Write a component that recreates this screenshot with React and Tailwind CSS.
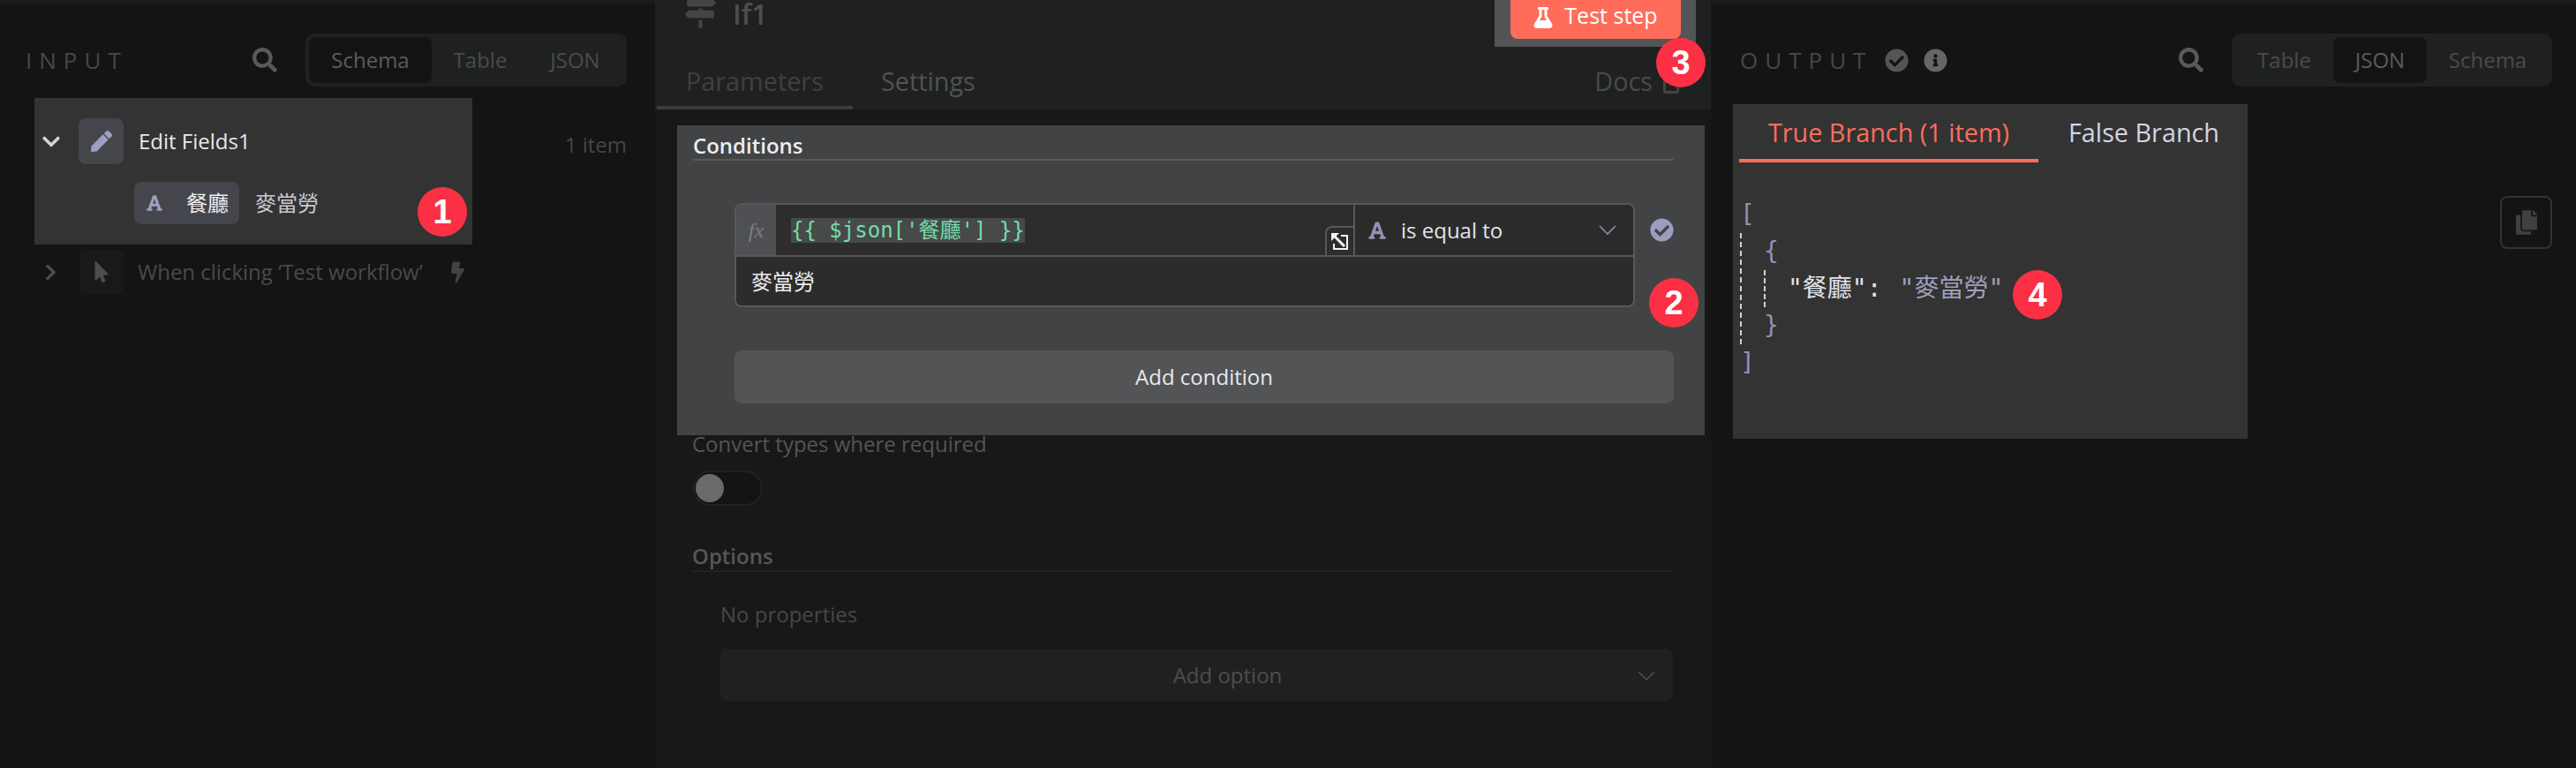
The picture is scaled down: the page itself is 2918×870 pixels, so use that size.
import React from "react";
import { FaSearch, FaPen, FaChevronDown, FaChevronRight, FaMousePointer, FaBolt, FaFont, FaMapSigns, FaFlask, FaCheckCircle, FaInfoCircle, FaCopy } from "react-icons/fa";

function Badge({ n, className }) {
  return (
    <div className={"absolute z-10 flex h-[56px] w-[56px] items-center justify-center rounded-full bg-[#fb3044] text-[38px] leading-none font-bold text-white [font-family:'Liberation_Sans',sans-serif] " + className}>
      {n}
    </div>
  );
}

function Thin({ className }) {
  return (
    <svg viewBox="0 0 20 11" className={className} fill="none" stroke="currentColor" strokeWidth="1.6">
      <path d="M1 1l9 9 9-9" />
    </svg>
  );
}

function Tabs({ items, active, className }) {
  return (
    <div className={"flex h-[60px] items-center rounded-[10px] bg-[#1f2120] p-[4px] text-[24px] " + className}>
      {items.map((t) => (
        <div key={t.l} style={{ width: t.w }} className={"flex h-[52px] items-center justify-center rounded-[8px] " + (t.l === active ? "bg-[#131313] text-[#5c5c5c]" : "text-[#4a4b4b]")}>
          {t.l}
        </div>
      ))}
    </div>
  );
}

export default function App() {
  return (
    <div className="flex h-[870px] w-[2918px] overflow-hidden bg-[#141414] text-[24px] [font-family:'Open_Sans','Noto_Sans_CJK_TC',sans-serif]">
      {/* Input */}
      <div className="flex w-[742px] shrink-0 flex-col">
        <div className="h-[5px] bg-[#1b1b1b]" />
        <div className="mt-[33px] flex h-[60px] items-center pr-[32px] pl-[29px]">
          <span className="text-[26px] tracking-[8px] text-[#474747]">INPUT</span>
          <FaSearch className="mr-[32px] ml-auto h-[28px] w-[28px] text-[#5a5a5a]" />
          <Tabs className="w-[364px]" active="Schema" items={[{ l: "Schema", w: 139 }, { l: "Table", w: 110 }, { l: "JSON", w: 105 }]} />
        </div>
        <div className="mt-[13px] flex pr-[32px] pl-[39px]">
          <div className="relative h-[166px] w-[496px] bg-[#333333] pt-[23px]">
            <div className="flex items-center">
              <FaChevronDown className="ml-[9px] h-[23px] w-[20px] text-[#d4d4e0]" />
              <div className="ml-[21px] flex h-[52px] w-[51px] items-center justify-center rounded-[8px] bg-[#45464b]">
                <FaPen className="h-[24px] w-[24px] text-[#9f9fc4]" />
              </div>
              <span className="ml-[17px] text-[#e8e8ee]">Edit Fields1</span>
            </div>
            <div className="mt-[20px] ml-[113px] flex items-center">
              <div className="flex h-[48px] w-[119px] items-center rounded-[8px] bg-[#45464b] pl-[14px]">
                <FaFont className="h-[20px] w-[18px] text-[#9f9fc4]" />
                <span className="ml-[27px] text-[#eeeef2]">餐廳</span>
              </div>
              <span className="ml-[18px] text-[#c8c8d0]">麥當勞</span>
            </div>
            <Badge n="1" className="top-[101px] left-[434px]" />
          </div>
          <span className="mt-[35px] ml-auto text-[#464646]">1 item</span>
        </div>
        <div className="mt-[6px] flex h-[50px] items-center pl-[51px]">
          <FaChevronRight className="h-[23px] w-[13px] text-[#4e4e4e]" />
          <div className="ml-[26px] flex h-[50px] w-[50px] items-center justify-center rounded-[8px] bg-[#191919]">
            <FaMousePointer className="h-[24px] w-[16px] text-[#4e4e4e]" />
          </div>
          <span className="ml-[16px] text-[#4a4a4a]">When clicking ‘Test workflow’</span>
          <FaBolt className="ml-[32px] h-[25px] w-[15px] text-[#424242]" />
        </div>
      </div>

      {/* Parameters */}
      <div className="flex w-[1196px] shrink-0 flex-col">
        <div className="relative h-[124px] bg-[#1f2120]">
          <div className="flex items-start">
            <FaMapSigns className="mt-[-4px] ml-[34px] h-[36px] w-[35px] text-[#454545]" />
            <span className="ml-[19px] text-[32px] leading-[32px] font-semibold text-[#4e4e4e]">If1</span>
            <div className="mr-[17px] ml-auto h-[53px] w-[228px] bg-[#535456] pl-[18px]">
              <div className="flex h-[44px] w-[193px] items-center justify-center rounded-b-[8px] bg-[#ff6d5a] pb-[8px] text-[25px] text-white">
                <FaFlask className="mt-[4px] mr-[13px] h-[24px] w-[22px]" />
                <span>Test step</span>
              </div>
            </div>
            <Badge n="3" className="top-[43px] left-[1134px]" />
          </div>
          <div className="absolute right-[36px] bottom-0 left-[2px] flex h-[64px] items-start text-[28.8px]">
            <div className="flex h-[64px] w-[222px] items-center border-b-[4px] border-[#3b3c3c] pt-[4px] pl-[33px] text-[#3f4040]">Parameters</div>
            <div className="ml-[32px] flex h-[64px] items-center text-[#515252]">Settings</div>
            <div className="ml-auto flex h-[64px] items-center text-[#4a4a4a]">
              Docs
              <div className="mt-[10px] ml-[12px] h-[18px] w-[18px] rounded-[3px] border-[3px] border-[#444]" />
            </div>
          </div>
        </div>
        <div className="flex-1 bg-[#181818] pr-[7px] pl-[25px]">
          <div className="relative mt-[18px] h-[351px] bg-[#424345] pt-[6px] pr-[35px] pl-[18px]">
            <div className="h-[34px] border-b-2 border-[#58595b] text-[24px] leading-[34px] font-semibold text-[#eeeeef]">Conditions</div>
            <div className="mt-[48px] ml-[47px] flex items-start">
              <div className="w-[1020px] overflow-hidden rounded-[8px] border-2 border-[#58585a]">
                <div className="flex h-[57px]">
                  <div className="flex w-[45px] items-center justify-center bg-[#4f5053] text-[24px] text-[#7d7d7f] italic [font-family:'Liberation_Serif',serif]">fx</div>
                  <div className="relative flex flex-1 items-center bg-[#2d2d2d] pl-[17px]">
                    <span className="flex h-[28px] items-center bg-[#474a49] text-[24px] whitespace-pre text-[#74dcab] [font-family:'DejaVu_Sans_Mono','Noto_Sans_CJK_TC',monospace]">{"{{ $json['餐廳'] }}"}</span>
                    <div className="absolute right-0 bottom-0 flex h-[33px] w-[32px] items-center justify-center rounded-tl-[8px] border-t-2 border-l-2 border-[#58585a] bg-[#2d2d2d]">
                      <svg viewBox="0 0 20 20" className="h-[20px] w-[20px]" fill="none" stroke="#f4f4f6">
                        <path d="M2 2L15 15" strokeWidth="3" />
                        <path d="M0 0H9L0 9Z" fill="#f4f4f6" stroke="none" />
                        <path d="M3 12V18H18V3H11" strokeWidth="2" />
                      </svg>
                    </div>
                  </div>
                  <div className="flex w-[317px] items-center border-l-2 border-[#58585a] bg-[#2b2b2b] pl-[14px]">
                    <FaFont className="h-[22px] w-[22px] text-[#9292b4]" />
                    <span className="ml-[16px] text-[#e4e4ea]">is equal to</span>
                    <Thin className="mr-[19px] ml-auto h-[11px] w-[20px] text-[#9090a4]" />
                  </div>
                </div>
                <div className="flex h-[57px] items-center border-t-2 border-[#58585a] bg-[#2c2c2c] pl-[17px] text-[#eeeeef]">麥當勞</div>
              </div>
              <FaCheckCircle className="mt-[17px] ml-[17px] h-[27px] w-[27px] text-[#9c9cc0]" />
            </div>
            <div className="mt-[49px] ml-[47px] flex h-[60px] w-[1064px] items-center justify-center rounded-[8px] bg-[#535456] text-[#e8e8f0]">Add condition</div>
            <Badge n="2" className="top-[173px] left-[1101px]" />
          </div>
          <div className="pr-[36px] pl-[17px]">
            <div className="h-[20px] leading-[20px] text-[#545555]">Convert types where required</div>
            <div className="mt-[20px] ml-[1px] flex h-[40px] w-[79px] items-center rounded-full border-2 border-[#202221] bg-[#141414] pl-[1px]">
              <div className="h-[32px] w-[32px] rounded-full bg-[#6a6a6a]" />
            </div>
            <div className="mt-[41px] h-[34px] border-b-2 border-[#202221] leading-[32px] font-semibold text-[#575757]">Options</div>
            <div className="mt-[32px] ml-[32px] leading-[32px] text-[#474747]">No properties</div>
            <div className="relative mt-[23px] ml-[32px] flex h-[59px] items-center justify-center rounded-[8px] bg-[#1f2120] pl-[70px] text-[#4d4d4d]">
              Add option
              <Thin className="absolute top-[25px] right-[20px] h-[11px] w-[20px] text-[#4d4d4d]" />
            </div>
          </div>
        </div>
      </div>

      {/* Output */}
      <div className="flex flex-1 flex-col">
        <div className="h-[5px] bg-[#1b1b1b]" />
        <div className="mt-[33px] flex h-[60px] items-center pr-[27px] pl-[33px]">
          <span className="text-[26px] tracking-[8px] text-[#474747]">OUTPUT</span>
          <FaCheckCircle className="ml-[14px] h-[27px] w-[27px] text-[#555]" />
          <FaInfoCircle className="ml-[17px] h-[27px] w-[27px] text-[#666]" />
          <FaSearch className="mr-[32px] ml-auto h-[28px] w-[28px] text-[#5a5a5a]" />
          <Tabs className="w-[363px]" active="JSON" items={[{ l: "Table", w: 111 }, { l: "JSON", w: 106 }, { l: "Schema", w: 138 }]} />
        </div>
        <div className="mt-[20px] flex pr-[27px] pl-[25px]">
          <div className="relative h-[379px] w-[583px] bg-[#333333]">
            <div className="flex h-[66px] pl-[7px] text-[28.8px]">
              <div className="flex w-[339px] items-center justify-center border-b-[4px] border-[#ff6d5a] pt-[2px] text-[#ff6d5a]">True Branch (1 item)</div>
              <div className="ml-[34px] flex h-[64px] items-center text-[#d4d4e2]">False Branch</div>
            </div>
            <div className="mt-[38px] pl-[8px] text-[28px] leading-[42px] whitespace-pre text-[#9292b4] [font-family:'DejaVu_Sans_Mono','Noto_Sans_CJK_TC',monospace]">
              <div>[</div>
              <div className="border-l-2 border-dashed border-[#d0d0dc] pl-[25px]">
                <div>{"{"}</div>
                <div className="border-l-2 border-dashed border-[#d0d0dc] pl-[25px]">
                  <span className="text-[#e2e2ea]">"餐廳":</span>
                  <span className="ml-[20px] text-[#a0a0bc]">"麥當勞"</span>
                </div>
                <div>{"}"}</div>
              </div>
              <div>]</div>
            </div>
            <Badge n="4" className="top-[188px] left-[317px]" />
          </div>
          <div className="mt-[104px] ml-auto flex h-[60px] w-[59px] items-center justify-center rounded-[8px] border-2 border-[#333]">
            <FaCopy className="h-[28px] w-[24px] text-[#404040]" />
          </div>
        </div>
      </div>
    </div>
  );
}
